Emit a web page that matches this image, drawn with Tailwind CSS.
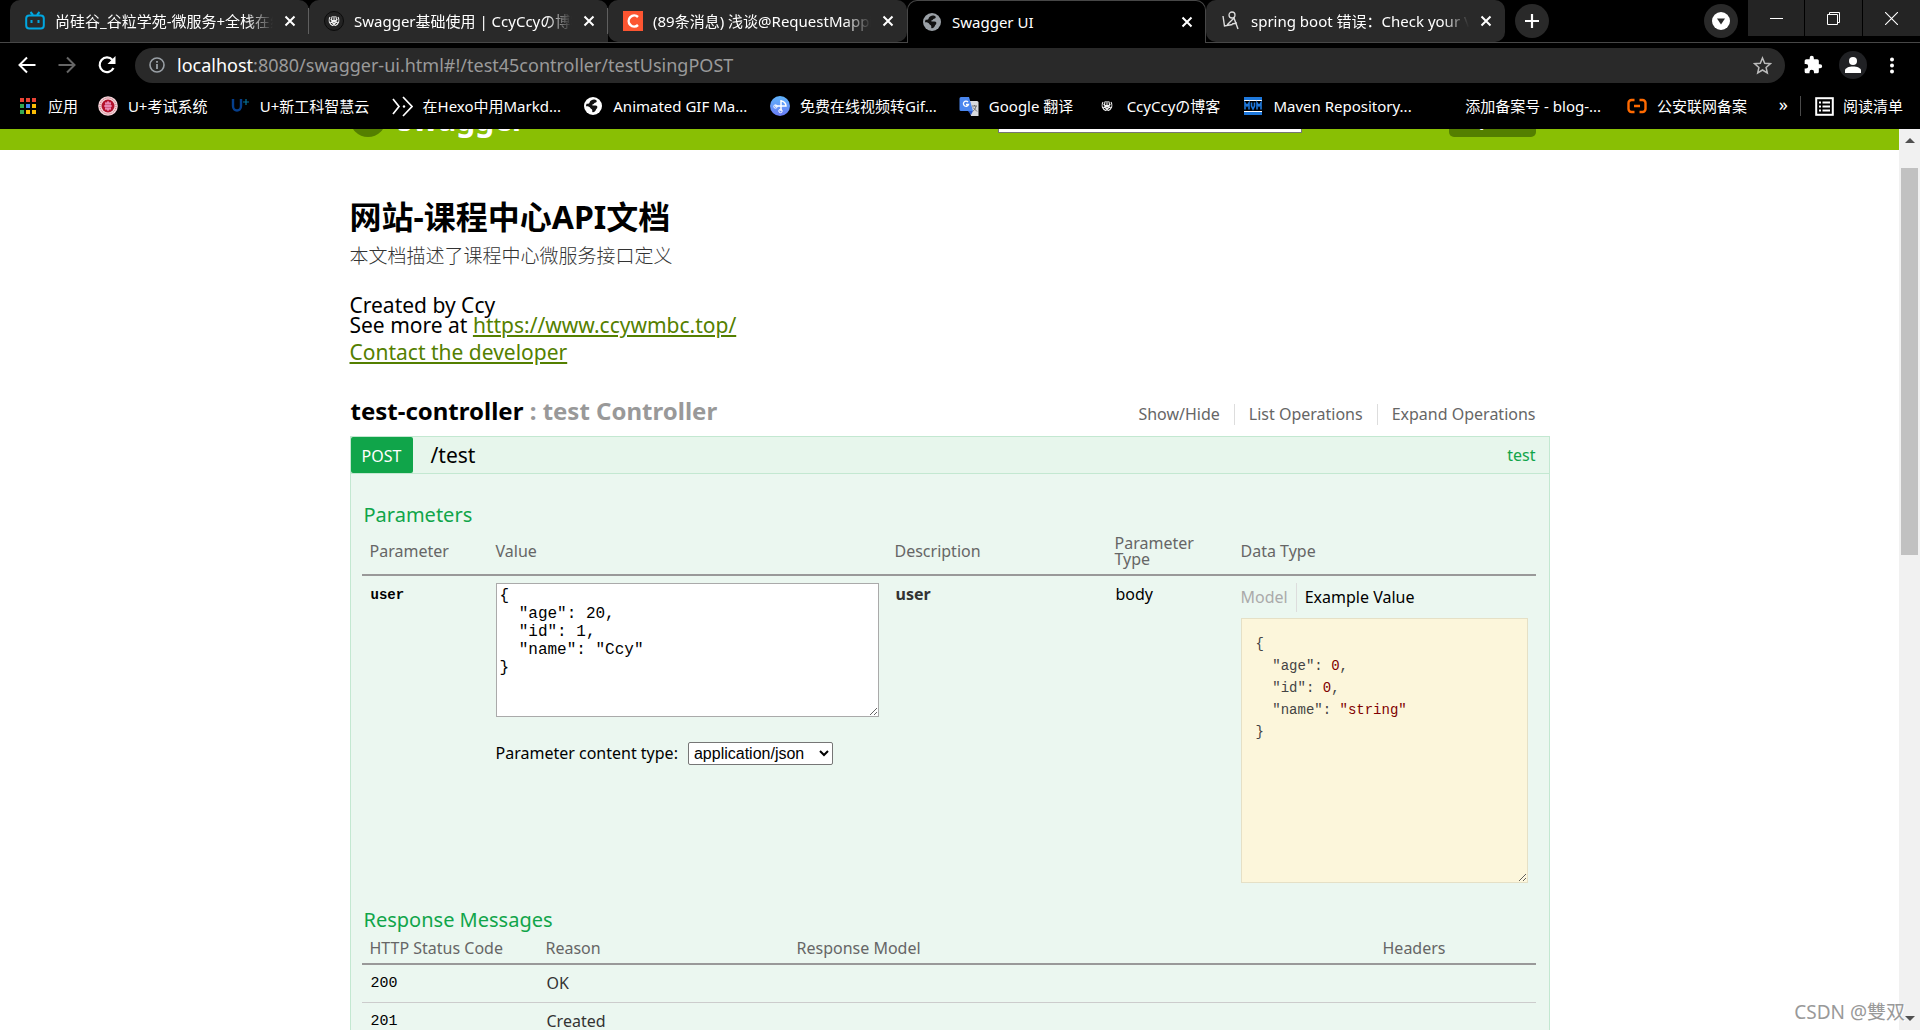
<!DOCTYPE html>
<html lang="zh-CN">
<head>
<meta charset="utf-8">
<title>Swagger UI</title>
<script src="https://cdn.jsdelivr.net/npm/@tailwindcss/browser@4"></script>
</head>
<body class="h-screen flex flex-col overflow-hidden bg-white text-black font-['Noto_Sans','Noto_Sans_CJK_SC',sans-serif]">

<svg class="hidden">
  <symbol id="close" viewBox="0 0 12 12"><path d="M1.5 1.5l9 9M10.5 1.5l-9 9" stroke="#fff" stroke-width="2" fill="none"/></symbol>
  <symbol id="globe" viewBox="0 0 20 20"><circle cx="10" cy="10" r="9" fill="currentColor"/><path d="M8.500 4.200c1.500-1 4-.8 5 .3.800 1-.3 2-1.500 2.200-1 .1-.8 1.300-2 1.500-1.200.2-.8 1.300.3 1.300h2.200c1.500 0 2 .8 1.800 2-.2 1.300-1.200 1.500-1.500 2.500-.3 1.200-1.800 2.500-3 2.300-1-.2-.3-1.600-.6-2.400-.3-1-1.500-.8-1.900-1.900-.5-1.200-2-1.800-3.500-1.800H3c0-1 .2-1.800.6-2.500 1.200.3 2.600 0 2.900-1 .3-1.100.8-1.800 2-2.500z" fill="#111"/></symbol>
  <symbol id="emblem" viewBox="3 3 14 14"><path d="M5 5c-3 4-1 9 4 11M8 4c-2 3-1 8 2 11M10 3.500v12.500M12 4c2 3 1 8-2 11M15 5c3 4 1 9-4 11M5.500 8l9 4M14.500 8l-9 4" stroke="#f4f4f4" stroke-width="1.400" fill="none"/></symbol>
</svg>

<header class="shrink-0 bg-black text-white">
  <!-- tab strip -->
  <div class="flex h-[43px] border-b border-[#474747] pl-[10px]">
    <nav class="flex min-w-0 text-[15px] leading-[20px]" aria-label="Tabs">
      <div class="flex h-[42px] w-[299px] items-center rounded-t-[10px] bg-[#292929] pl-[15px]">
        <svg class="size-5 shrink-0" viewBox="0 0 20 20"><path d="M5.500 1l2.500 3M14.500 1L12 4" stroke="#00a7e1" stroke-width="2"/><rect x="1.200" y="4.500" width="17.600" height="13" rx="3" fill="none" stroke="#00a7e1" stroke-width="2"/><path d="M6.500 9v3M13.500 9v3" stroke="#00a7e1" stroke-width="2"/></svg>
        <a href="#" class="ml-[10px] w-[218px] overflow-hidden whitespace-nowrap [mask-image:linear-gradient(to_right,black_88%,transparent)]">尚硅谷_谷粒学苑-微服务+全栈在线教育</a>
        <button class="ml-auto" aria-label="Close tab"><svg class="size-3"><use href="#close"/></svg></button>
        <span class="ml-3 h-[26px] w-px bg-[#5f5f5f]"></span>
      </div>
      <div class="flex h-[42px] w-[299px] items-center rounded-t-[10px] bg-[#292929] pl-[15px]">
        <svg class="size-5 shrink-0" viewBox="0 0 20 20"><circle cx="10" cy="10" r="9.500" fill="#222" stroke="#0c0c0c"/><use href="#emblem" x="4.500" y="4.500" width="11" height="11"/></svg>
        <a href="#" class="ml-[10px] w-[218px] overflow-hidden whitespace-nowrap [mask-image:linear-gradient(to_right,black_88%,transparent)]">Swagger基础使用 | CcyCcyの博客</a>
        <button class="ml-auto" aria-label="Close tab"><svg class="size-3"><use href="#close"/></svg></button>
        <span class="ml-3 h-[26px] w-px bg-[#5f5f5f]"></span>
      </div>
      <div class="flex h-[42px] w-[299px] items-center rounded-[10px] bg-[#292929] pl-[15px] pr-[13px]">
        <svg class="size-5 shrink-0" viewBox="0 0 20 20"><path fill="#fc5531" d="M0 0h20v20H0z"/><path d="M15 6a5.500 5.500 0 1 0 0 8" stroke="#fff" stroke-width="2.500" fill="none"/></svg>
        <a href="#" class="ml-[10px] w-[218px] overflow-hidden whitespace-nowrap [mask-image:linear-gradient(to_right,black_88%,transparent)]">(89条消息) 浅谈@RequestMapping</a>
        <button class="ml-auto" aria-label="Close tab"><svg class="size-3"><use href="#close"/></svg></button>
      </div>
      <div class="flex h-[43px] w-[299px] items-center rounded-t-[10px] border border-b-0 border-[#474747] bg-black pl-[14px] pr-[12px]">
        <svg class="size-5 shrink-0 text-[#9aa0a6]"><use href="#globe"/></svg>
        <a href="#" class="ml-[10px] w-[218px] overflow-hidden whitespace-nowrap">Swagger UI</a>
        <button class="ml-auto" aria-label="Close tab"><svg class="size-3"><use href="#close"/></svg></button>
      </div>
      <div class="flex h-[42px] w-[299px] items-center rounded-[10px] bg-[#292929] pl-[15px] pr-[13px]">
        <svg class="size-5 shrink-0" viewBox="0 0 20 20"><circle cx="11" cy="4" r="3" fill="none" stroke="#ddd" stroke-width="1.300"/><path d="M2 5l1.500 10 8-1.500M6 14l7-7 4 11M11 13l5-1" stroke="#ddd" stroke-width="1.400" fill="none"/></svg>
        <a href="#" class="ml-[10px] w-[218px] overflow-hidden whitespace-nowrap [mask-image:linear-gradient(to_right,black_88%,transparent)]">spring boot 错误：Check your Vie</a>
        <button class="ml-auto" aria-label="Close tab"><svg class="size-3"><use href="#close"/></svg></button>
      </div>
    </nav>
    <button class="ml-[10px] mt-1 flex size-[34px] shrink-0 items-center justify-center rounded-full bg-[#292929]" aria-label="New tab"><svg class="size-4" viewBox="0 0 16 16"><path d="M8 1v14M1 8h14" stroke="#fff" stroke-width="2.200"/></svg></button>
    <button class="ml-auto mt-1 flex size-[34px] shrink-0 items-center justify-center rounded-full bg-[#292929]" aria-label="Search tabs"><svg class="size-[18px]" viewBox="0 0 18 18"><circle cx="9" cy="9" r="9" fill="#fff"/><path d="M5 6.500h8L9 12.500z" fill="#292929"/></svg></button>
    <div class="ml-[10px] flex h-9 shrink-0 gap-px">
      <button class="flex w-14 items-center justify-center bg-[#242424]" aria-label="Minimize"><svg class="size-[13px]" viewBox="0 0 13 13"><path d="M0 6.500h13" stroke="#fff"/></svg></button>
      <button class="flex w-[57px] items-center justify-center bg-[#242424]" aria-label="Restore"><svg class="size-[13px]" viewBox="0 0 13 13"><path d="M.5 2.500h10v10H.5zM2.500 2.500v-2h10v10h-2" fill="none" stroke="#fff"/></svg></button>
      <button class="flex w-[57px] items-center justify-center bg-[#242424]" aria-label="Close"><svg class="size-[13px]" viewBox="0 0 13 13"><path d="M0 0l13 13M13 0L0 13" stroke="#fff" stroke-width="1.100"/></svg></button>
    </div>
  </div>

  <!-- toolbar -->
  <div class="flex h-[45px] items-center pb-px pl-[18px] pr-6">
    <button aria-label="Back"><svg class="size-[18px]" viewBox="0 0 18 18"><path d="M17.500 9H2M9 1.500L1.500 9 9 16.500" fill="none" stroke="#fff" stroke-width="2"/></svg></button>
    <button class="ml-[22px]" aria-label="Forward"><svg class="size-[18px]" viewBox="0 0 18 18"><path d="M.5 9H16M9 1.500L16.500 9 9 16.500" fill="none" stroke="#666" stroke-width="2"/></svg></button>
    <button class="ml-[22px]" aria-label="Reload"><svg class="size-[18px]" viewBox="0 0 18 18"><path d="M15.500 12a7.300 7.300 0 1 1-1-8" fill="none" stroke="#fff" stroke-width="2.200"/><path d="M17.500 0v8h-8z" fill="#fff"/></svg></button>
    <div class="ml-[19px] flex h-[35px] min-w-0 flex-1 items-center rounded-full bg-[#292929] pl-[14px] pr-[13px]">
      <svg class="size-4 shrink-0" viewBox="0 0 16 16"><circle cx="8" cy="8" r="7" fill="none" stroke="#9aa0a6" stroke-width="1.600"/><path d="M8 7v5M8 4v1.800" stroke="#9aa0a6" stroke-width="1.800"/></svg>
      <div class="ml-3 flex-1 text-[18px] leading-[24px] text-[#9a9a9a]"><span class="text-white">localhost</span>:8080/swagger-ui.html#!/test45controller/testUsingPOST</div>
      <button aria-label="Bookmark"><svg class="size-[19px]" viewBox="0 0 19 19"><path d="M9.500 2l2.200 5.200 5.600.5-4.200 3.700 1.200 5.500-4.800-2.900-4.800 2.900L5.900 11.400 1.700 7.700l5.600-.5z" fill="none" stroke="#bbb" stroke-width="1.500"/></svg></button>
    </div>
    <button class="ml-[18px]" aria-label="Extensions"><svg class="size-5" viewBox="0 0 24 24"><path fill="#fff" d="M20.500 11H19V7a2 2 0 0 0-2-2h-4V3.500a2.500 2.500 0 0 0-5 0V5H4a2 2 0 0 0-2 2v3.800h1.500a2.700 2.700 0 0 1 0 5.400H2V20a2 2 0 0 0 2 2h3.800v-1.500a2.700 2.700 0 0 1 5.400 0V22H17a2 2 0 0 0 2-2v-4h1.500a2.500 2.500 0 0 0 0-5z"/></svg></button>
    <button class="ml-4 flex size-7 items-center justify-center rounded-full bg-[#202124]" aria-label="Profile"><svg class="size-4" viewBox="0 0 16 16"><circle cx="8" cy="4" r="4" fill="#fff"/><path d="M0 16v-2.500C0 11 4 9.500 8 9.500s8 1.500 8 4V16z" fill="#fff"/></svg></button>
    <button class="ml-[21px]" aria-label="Menu"><svg class="h-[17px] w-[8px]" viewBox="0 0 8 17"><g fill="#fff"><circle cx="4" cy="2.500" r="2"/><circle cx="4" cy="8.500" r="2"/><circle cx="4" cy="14.500" r="2"/></g></svg></button>
  </div>

  <!-- bookmarks -->
  <nav class="flex h-[41px] items-center whitespace-nowrap pb-[5px] pl-[18px] pr-[17px] text-[15px] leading-[20px]" aria-label="Bookmarks">
    <a href="#" class="flex w-20 items-center gap-[10px]"><svg class="size-5" viewBox="0 0 20 20"><path d="M2 2h4v4H2zM8 2h4v4H8zM14 2h4v4h-4z" fill="#ea4335"/><path d="M2 8h4v4H2zM2 14h4v4H2z" fill="#34a853"/><path d="M8 8h4v4H8z" fill="#4285f4"/><path d="M14 8h4v4h-4zM8 14h4v4H8zM14 14h4v4h-4z" fill="#fbbc05"/></svg>应用</a>
    <a href="#" class="flex w-[132px] items-center gap-[10px]"><svg class="size-5" viewBox="0 0 20 20"><circle cx="10" cy="10" r="9.800" fill="#f3d5da"/><circle cx="10" cy="10" r="8" fill="none" stroke="#c65a6b" stroke-dasharray="1 1"/><circle cx="10" cy="10" r="6.500" fill="#b3122c"/><path d="M10 5v10M7 7h6M6 10h8M7 13h6M8 7v6M12 7v6" stroke="#fbe" stroke-width=".9"/></svg>U+考试系统</a>
    <a href="#" class="flex w-[162px] items-center gap-[10px]"><svg class="size-5" viewBox="0 0 20 20"><path d="M3 3v7c0 6 8 6 8 0V3" fill="none" stroke="#063f8c" stroke-width="2.400"/><path d="M16 3v6M13 6h6" stroke="#06749c" stroke-width="1.200"/></svg>U+新工科智慧云</a>
    <a href="#" class="flex w-[192px] items-center gap-[10px]"><svg class="size-[21px]" viewBox="0 0 21 21"><path d="M1 3l6 7.500L1 18M11 1l9 9.500L11 20" fill="none" stroke="#fff" stroke-width="1.700"/><circle cx="12" cy="10.500" r="1.200" fill="#fff"/></svg>在Hexo中用Markd...</a>
    <a href="#" class="flex w-[187px] items-center gap-[10px]"><svg class="size-5 text-white"><use href="#globe"/></svg>Animated GIF Ma...</a>
    <a href="#" class="flex w-[189px] items-center gap-[10px]"><svg class="size-5" viewBox="0 0 20 20"><defs><linearGradient id="sky" x2="0" y2="1"><stop stop-color="#5fb4fb"/><stop offset="1" stop-color="#6a7cf5"/></linearGradient></defs><circle cx="10" cy="10" r="10" fill="url(#sky)"/><path d="M11 4v6h5a5 5 0 0 0-5-5M11 10H5M11 10v5" fill="none" stroke="#fff" stroke-width="1.500"/><circle cx="5.500" cy="10.500" r="1.700" fill="none" stroke="#fff"/><circle cx="10.500" cy="15" r="1.700" fill="none" stroke="#fff"/></svg>免费在线视频转Gif...</a>
    <a href="#" class="flex w-[138px] items-center gap-[10px]"><svg class="size-5" viewBox="0 0 20 20"><path d="M8 5h10a1.500 1.500 0 0 1 1.500 1.500V20H12z" fill="#d8dade"/><path d="M2 1h8l4 14H2a1.500 1.500 0 0 1-1.500-1.500v-11A1.500 1.500 0 0 1 2 1z" fill="#4a86ee"/><path d="M9 15h5l-2 4z" fill="#2a56c6"/><path d="M9 6a2.600 2.600 0 1 0 .5 2.500H7" fill="none" stroke="#fff" stroke-width="1.300"/><path d="M13 10h5M15.500 9v1M17 10c-.5 3-2 4.500-3 5M14 11.500l4 4" stroke="#666" stroke-width=".9" fill="none"/></svg>Google 翻译</a>
    <a href="#" class="flex w-[147px] items-center gap-[10px]"><svg class="size-5" viewBox="0 0 20 20"><use href="#emblem" x="4.500" y="4.500" width="11" height="11"/></svg>CcyCcyの博客</a>
    <a href="#" class="flex w-[192px] items-center gap-[10px]"><svg class="size-5" viewBox="0 0 20 20"><path d="M1 1h18v3H1zM1 16h18v3H1z" fill="#1e78dc"/><path d="M1 4.500h18M1 15.500h18" stroke="#fff"/><path d="M2 13.500V7l2 3 2-3v6.500M8.500 6.500v3.500l1.500 3 1.500-3V6.500M14 13.500V7l2 3 2-3v6.500" fill="none" stroke="#1e78dc" stroke-width="1.600"/></svg>Maven Repository...</a>
    <a href="#" class="flex w-[192px] items-center pl-[30px]">添加备案号 - blog-...</a>
    <a href="#" class="flex w-[152px] items-center gap-[10px]"><svg class="size-5" viewBox="0 0 20 20"><path d="M7.500 4H4.500A3 3 0 0 0 1.500 7v6a3 3 0 0 0 3 3h3M12.500 4h3a3 3 0 0 1 3 3v6a3 3 0 0 1-3 3h-3M7 10h6" fill="none" stroke="#ff6a00" stroke-width="2.400"/></svg>公安联网备案</a>
    <button class="ml-auto pb-1 text-[18px]" aria-label="More bookmarks">»</button>
    <a href="#" class="ml-3 flex h-5 items-center gap-[9px] border-l border-[#4a4a4a] pl-[14px]"><svg class="size-[19px]" viewBox="0 0 19 19"><rect x="1.200" y="1.200" width="16.600" height="16.600" fill="none" stroke="#fff" stroke-width="2"/><path d="M4 5.500h2M4 9.500h2M4 13.500h2M7.500 5.500H15M7.500 9.500H15M7.500 13.500H15" stroke="#fff" stroke-width="2"/></svg>阅读清单</a>
  </nav>
</header>

<div class="flex min-h-0 flex-1">
  <div class="min-w-0 flex-1 overflow-hidden">
    <!-- API bar, scrolled mostly out of view -->
    <div class="flex h-[21px] flex-col justify-end overflow-hidden bg-[#89bf04]">
      <div class="mx-auto mb-[13px] flex h-9 w-full max-w-[1200px] shrink-0 items-center">
        <svg class="size-9 shrink-0" viewBox="0 0 36 36"><circle cx="18" cy="18" r="18" fill="#547f00"/></svg>
        <a href="#" class="ml-3 pt-px text-[30px] font-bold leading-9 text-white">swagger</a>
        <input class="ml-auto h-[27px] w-[304px] border border-[#767676] bg-white px-1" aria-label="API URL">
        <button class="ml-[147px] mr-[14px] h-[35px] w-[87px] rounded-[5px] bg-[#547f00] text-[18px] font-bold leading-[35px] text-white">Explore</button>
      </div>
    </div>

    <main class="mx-auto w-full max-w-[1200px] pt-[46px]">
      <h1 class="text-[32px] font-bold leading-[42px]">网站-课程中心API文档</h1>
      <p class="mt-[5px] text-[19px] font-light leading-[26px] text-[#333]">本文档描述了课程中心微服务接口定义</p>
      <div class="mt-[26px] text-[21px] leading-[20px]">
        <p>Created by Ccy</p>
        <p>See more at <a href="#" class="text-[#547f00] underline">https://www.ccywmbc.top/</a></p>
        <p class="mt-[7px]"><a href="#" class="text-[#547f00] underline">Contact the developer</a></p>
      </div>

      <div class="mt-[32px] flex items-start justify-between">
        <h2 class="pl-px text-[24px] font-bold leading-[34px] text-[#999]"><a href="#" class="text-black">test-controller</a> : test Controller</h2>
        <ul class="mr-[14px] mt-[10px] flex text-[16px] leading-[21px] text-[#666]">
          <li class="border-r border-[#ddd] pr-[14px]"><a href="#">Show/Hide</a></li>
          <li class="border-r border-[#ddd] px-[14px]"><a href="#">List Operations</a></li>
          <li class="pl-[14px]"><a href="#">Expand Operations</a></li>
        </ul>
      </div>

      <section class="mt-2">
        <div class="flex h-[38px] items-center border border-[#c3e8d1] bg-[#e7f6ec] pr-[13px]">
          <button class="h-9 w-[62px] rounded-[2px] bg-[#10a54a] pt-[2px] text-[16px] text-white">POST</button>
          <a href="#" class="ml-[18px] text-[21px] leading-[24px]">/test</a>
          <a href="#" class="ml-auto text-[16px] leading-[22px] text-[#10a54a]">test</a>
        </div>
        <div class="border border-t-0 border-[#c3e8d1] bg-[#ebf7f0] pb-10 pl-[11px] pr-[13px] pt-[29px]">
          <h3 class="pl-[2px] text-[20px] leading-[24px] text-[#10a54a]">Parameters</h3>
          <table class="mt-[6px] w-full table-fixed border-collapse text-[16px]">
            <colgroup><col class="w-[126px]"><col class="w-[399px]"><col class="w-[220px]"><col class="w-[126px]"><col></colgroup>
            <thead>
              <tr class="h-[42px] border-b-2 border-[#999] text-left leading-[16px] text-[#666]">
                <th class="px-2 pb-[6px] font-normal">Parameter</th><th class="px-2 pb-[6px] font-normal">Value</th><th class="px-2 pb-[6px] font-normal">Description</th><th class="px-2 pb-[6px] font-normal">Parameter Type</th><th class="px-2 pb-[6px] font-normal">Data Type</th>
              </tr>
            </thead>
            <tbody>
              <tr class="align-top">
                <td class="px-[9px] pt-2 font-['Liberation_Mono',monospace] text-[14px] font-bold leading-[22px]"><label for="body">user</label></td>
                <td class="px-2 pt-[7px]">
                  <textarea id="body" class="block h-[134px] w-[383px] border border-[#aaa] bg-white px-[3px] py-[3px] font-['Liberation_Mono',monospace] text-[16px] leading-[18px]">{
  "age": 20,
  "id": 1,
  "name": "Ccy"
}</textarea>
                  <div class="mt-6 flex items-center leading-[24px]">
                    <label for="ctype">Parameter content type:</label>
                    <select id="ctype" class="ml-[10px] h-[23px] w-[145px] rounded-[2px] border border-[#767676] bg-white pl-px font-['Liberation_Sans',sans-serif] text-[16px] leading-[20px]"><option>application/json</option></select>
                  </div>
                </td>
                <td class="px-[9px] pt-[7px] font-bold leading-[22px] text-[#333]">user</td>
                <td class="px-[9px] pt-[7px] leading-[22px]">body</td>
                <td class="px-2 pt-[7px]">
                  <div class="flex leading-[29px]">
                    <a href="#" class="border-r border-[#ddd] pr-2 text-[#aaa]">Model</a>
                    <a href="#" class="pl-2">Example Value</a>
                  </div>
                  <pre class="mt-[6px] h-[265px] resize overflow-hidden border border-[#e5e0c6] bg-[#fcf6db] px-[14px] py-[14px] font-['Liberation_Mono',monospace] text-[14px] leading-[22px] text-[#444]">{
  "age": <span class="text-[#800000]">0</span>,
  "id": <span class="text-[#800000]">0</span>,
  "name": <span class="text-[#800000]">"string"</span>
}</pre>
                </td>
              </tr>
            </tbody>
          </table>

          <h3 class="mt-[25px] pl-[2px] text-[20px] leading-[24px] text-[#10a54a]">Response Messages</h3>
          <table class="mt-1 w-full table-fixed border-collapse text-[16px]">
            <colgroup><col class="w-[176px]"><col class="w-[251px]"><col class="w-[586px]"><col></colgroup>
            <thead>
              <tr class="h-[28px] border-b-2 border-[#999] text-left leading-[22px] text-[#666]">
                <th class="px-2 pb-1 font-normal">HTTP Status Code</th><th class="px-2 pb-1 font-normal">Reason</th><th class="px-2 pb-1 font-normal">Response Model</th><th class="px-2 pb-1 font-normal">Headers</th>
              </tr>
            </thead>
            <tbody class="leading-[22px]">
              <tr class="h-[38px] border-b border-[#ccc]"><td class="px-[9px] pt-[2px] font-['Liberation_Mono',monospace] text-[15px]">200</td><td class="px-[9px] text-[#333]">OK</td><td></td><td></td></tr>
              <tr class="h-[38px] border-b border-[#ccc]"><td class="px-[9px] pt-[2px] font-['Liberation_Mono',monospace] text-[15px]">201</td><td class="px-[9px] text-[#333]">Created</td><td></td><td></td></tr>
            </tbody>
          </table>
        </div>
      </section>
    </main>
  </div>

  <!-- scrollbar -->
  <div class="flex w-[21px] shrink-0 flex-col items-center bg-[#f1f1f1]">
    <svg class="mt-2 h-[7px] w-[10px]" viewBox="0 0 10 7"><path d="M0 6l5-5 5 5z" fill="#505050"/></svg>
    <div class="mt-6 h-[43%] w-[17px] bg-[#c1c1c1]"></div>
    <svg class="mb-2 mt-auto h-[7px] w-[10px]" viewBox="0 0 10 7"><path d="M0 1l5 5 5-5z" fill="#505050"/></svg>
  </div>
</div>

<div class="absolute bottom-1 right-[15px] text-[19px] leading-[28px] text-[#999] [text-shadow:1px_1px_0_#fff]">CSDN @雙双</div>
</body>
</html>
